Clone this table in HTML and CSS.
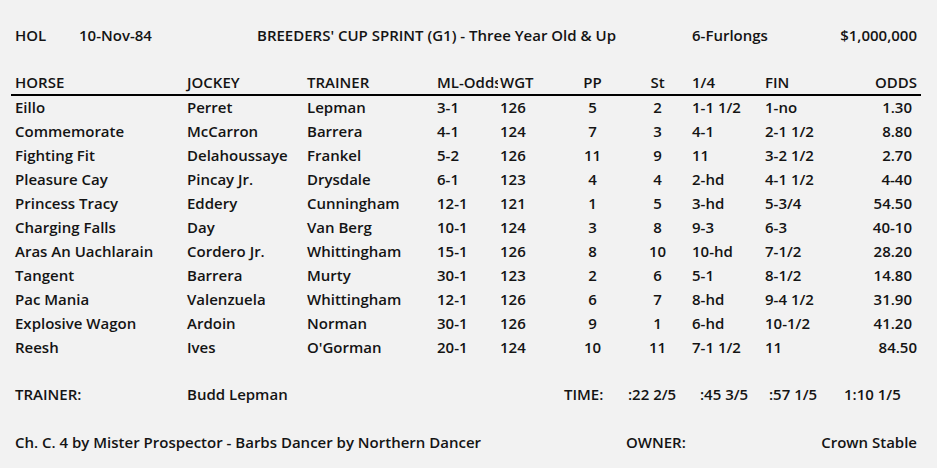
FILE: index.html
```html
<!DOCTYPE html>
<html>
<head>
<meta charset="utf-8">
<link rel="stylesheet" href="styles.css">
</head>
<body>
<div class="sheet">
  <div class="race">
    <span>HOL</span>
    <span>10-Nov-84</span>
    <span>BREEDERS' CUP SPRINT (G1) - Three Year Old &amp; Up</span>
    <span>6-Furlongs</span>
    <span class="r">$1,000,000</span>
  </div>

  <div class="grid head">
    <span>HORSE</span><span>JOCKEY</span><span>TRAINER</span><span class="clip">ML-Odds</span><span>WGT</span><span class="c">PP</span><span class="c">St</span><span class="q">1/4</span><span>FIN</span><span class="r">ODDS</span>
  </div>

  <div class="grid row"><span>Eillo</span><span>Perret</span><span>Lepman</span><span>3-1</span><span>126</span><span class="c">5</span><span class="c">2</span><span class="q">1-1 1/2</span><span>1-no</span><span class="r v">1.30</span></div>
  <div class="grid row"><span>Commemorate</span><span>McCarron</span><span>Barrera</span><span>4-1</span><span>124</span><span class="c">7</span><span class="c">3</span><span class="q">4-1</span><span>2-1 1/2</span><span class="r v">8.80</span></div>
  <div class="grid row"><span>Fighting Fit</span><span>Delahoussaye</span><span>Frankel</span><span>5-2</span><span>126</span><span class="c">11</span><span class="c">9</span><span class="q">11</span><span>3-2 1/2</span><span class="r v">2.70</span></div>
  <div class="grid row"><span>Pleasure Cay</span><span>Pincay Jr.</span><span>Drysdale</span><span>6-1</span><span>123</span><span class="c">4</span><span class="c">4</span><span class="q">2-hd</span><span>4-1 1/2</span><span class="r v">4-40</span></div>
  <div class="grid row"><span>Princess Tracy</span><span>Eddery</span><span>Cunningham</span><span>12-1</span><span>121</span><span class="c">1</span><span class="c">5</span><span class="q">3-hd</span><span>5-3/4</span><span class="r v">54.50</span></div>
  <div class="grid row"><span>Charging Falls</span><span>Day</span><span>Van Berg</span><span>10-1</span><span>124</span><span class="c">3</span><span class="c">8</span><span class="q">9-3</span><span>6-3</span><span class="r v">40-10</span></div>
  <div class="grid row"><span>Aras An Uachlarain</span><span>Cordero Jr.</span><span>Whittingham</span><span>15-1</span><span>126</span><span class="c">8</span><span class="c">10</span><span class="q">10-hd</span><span>7-1/2</span><span class="r v">28.20</span></div>
  <div class="grid row"><span>Tangent</span><span>Barrera</span><span>Murty</span><span>30-1</span><span>123</span><span class="c">2</span><span class="c">6</span><span class="q">5-1</span><span>8-1/2</span><span class="r v">14.80</span></div>
  <div class="grid row"><span>Pac Mania</span><span>Valenzuela</span><span>Whittingham</span><span>12-1</span><span>126</span><span class="c">6</span><span class="c">7</span><span class="q">8-hd</span><span>9-4 1/2</span><span class="r v">31.90</span></div>
  <div class="grid row"><span>Explosive Wagon</span><span>Ardoin</span><span>Norman</span><span>30-1</span><span>126</span><span class="c">9</span><span class="c">1</span><span class="q">6-hd</span><span>10-1/2</span><span class="r v">41.20</span></div>
  <div class="grid row"><span>Reesh</span><span>Ives</span><span>O'Gorman</span><span>20-1</span><span>124</span><span class="c">10</span><span class="c">11</span><span class="q">7-1 1/2</span><span>11</span><span class="r">84.50</span></div>

  <div class="foot1">
    <span>TRAINER:</span>
    <span class="wide">Budd Lepman</span>
    <span>TIME:</span>
    <span>:22 2/5</span>
    <span>:45 3/5</span>
    <span>:57 1/5</span>
    <span>1:10 1/5</span>
  </div>

  <div class="foot2">
    <span>Ch. C. 4 by Mister Prospector - Barbs Dancer by Northern Dancer</span>
    <span>OWNER:</span>
    <span class="r">Crown Stable</span>
  </div>
</div>
</body>
</html>
```

FILE: styles.css
```css
html, body {
  margin: 0;
  padding: 0;
  background: #f2f2f2;
}

body {
  font-family: "Open Sans", "Liberation Sans", sans-serif;
  font-weight: 600;
  font-size: 15px;
  color: #141414;
}

.sheet {
  width: 902px;
  padding: 23px 0 0 15px;
}

.sheet span {
  white-space: nowrap;
}

.race {
  display: grid;
  grid-template-columns: 64px 178px 435px 1fr auto;
  line-height: 24px;
}

.grid {
  display: grid;
  grid-template-columns: 172px 120px 130px 63px 60px 65px 65px 75px 80px 1fr;
}

.head {
  margin-top: 24px;
  line-height: 23px;
  border-bottom: 2px solid #000;
  margin-left: -4px;
  margin-right: -4px;
  padding-left: 4px;
  padding-right: 4px;
}

.row {
  line-height: 22px;
  padding-bottom: 2px;
}

.clip {
  overflow: hidden;
  width: 61px;
}

.c {
  text-align: center;
}

.q {
  padding-left: 2px;
}

.r {
  text-align: right;
}

.v {
  padding-right: 5px;
}

.foot1 {
  display: grid;
  grid-template-columns: 172px 377px 64px 72px 69px 75px auto;
  line-height: 24px;
  margin-top: 22px;
}

.foot2 {
  display: grid;
  grid-template-columns: 611px 1fr auto;
  line-height: 24px;
  margin-top: 24px;
}
```
